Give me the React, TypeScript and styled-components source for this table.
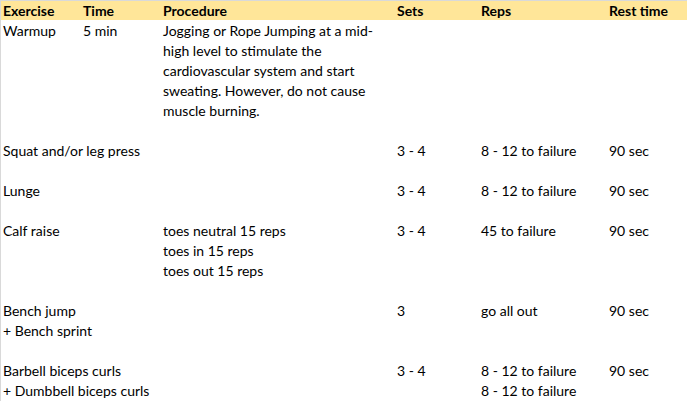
import React from "react";
import styled, { createGlobalStyle } from "styled-components";

const Global = createGlobalStyle`
  html, body { margin: 0; padding: 0; background: #ffffff; }
  body { font-family: Lato, "Open Sans", sans-serif; color: #000; }
`;

const Sheet = styled.div`
  width: 687px;
  height: 401px;
  box-sizing: border-box;
  border-top: 1px solid #d9d9d9;
  border-left: 1px solid #d9d9d9;
  overflow: hidden;
  font-size: 14px;
`;

const cols = "80px 80px 234px 84px 128px 1fr";

const HeaderRow = styled.div`
  display: grid;
  grid-template-columns: ${cols};
  padding-left: 2px;
  height: 19px;
  line-height: 19px;
  background: #ffe699;
  font-weight: 700;
`;

const Row = styled.div<{ $last?: boolean }>`
  display: grid;
  grid-template-columns: ${cols};
  padding-left: 2px;
  padding-bottom: ${(p) => (p.$last ? 0 : 20)}px;
  line-height: 20px;
`;

const Body = styled.div`
  padding-top: 1px;
`;

const Cell = styled.div`
  white-space: nowrap;
`;

const Line = styled.div`
  height: 20px;
`;

type Ex = {
  ex: string[];
  time?: string;
  proc?: string[];
  sets?: string;
  reps?: string[];
  rest?: string;
};

const rows: Ex[] = [
  {
    ex: ["Warmup"],
    time: "5 min",
    proc: [
      "Jogging or Rope Jumping at a mid-",
      "high level to stimulate the",
      "cardiovascular system and start",
      "sweating. However, do not cause",
      "muscle burning.",
    ],
  },
  { ex: ["Squat and/or leg press"], sets: "3 - 4", reps: ["8 - 12 to failure"], rest: "90 sec" },
  { ex: ["Lunge"], sets: "3 - 4", reps: ["8 - 12 to failure"], rest: "90 sec" },
  {
    ex: ["Calf raise"],
    proc: ["toes neutral 15 reps", "toes in 15 reps", "toes out 15 reps"],
    sets: "3 - 4",
    reps: ["45 to failure"],
    rest: "90 sec",
  },
  { ex: ["Bench jump", "+ Bench sprint"], sets: "3", reps: ["go all out"], rest: "90 sec" },
  {
    ex: ["Barbell biceps curls", "+ Dumbbell biceps curls"],
    sets: "3 - 4",
    reps: ["8 - 12 to failure", "8 - 12 to failure"],
    rest: "90 sec",
  },
];

const Lines = ({ items }: { items?: string[] }) => (
  <Cell>
    {(items || []).map((t, i) => (
      <Line key={i}>{t}</Line>
    ))}
  </Cell>
);

export default function App() {
  return (
    <>
      <Global />
      <Sheet>
        <HeaderRow>
          <Cell>Exercise</Cell>
          <Cell>Time</Cell>
          <Cell>Procedure</Cell>
          <Cell>Sets</Cell>
          <Cell>Reps</Cell>
          <Cell>Rest time</Cell>
        </HeaderRow>
        <Body>
          {rows.map((r, i) => (
            <Row key={i} $last={i === rows.length - 1}>
              <Lines items={r.ex} />
              <Lines items={r.time ? [r.time] : []} />
              <Lines items={r.proc} />
              <Lines items={r.sets ? [r.sets] : []} />
              <Lines items={r.reps} />
              <Lines items={r.rest ? [r.rest] : []} />
            </Row>
          ))}
        </Body>
      </Sheet>
    </>
  );
}
